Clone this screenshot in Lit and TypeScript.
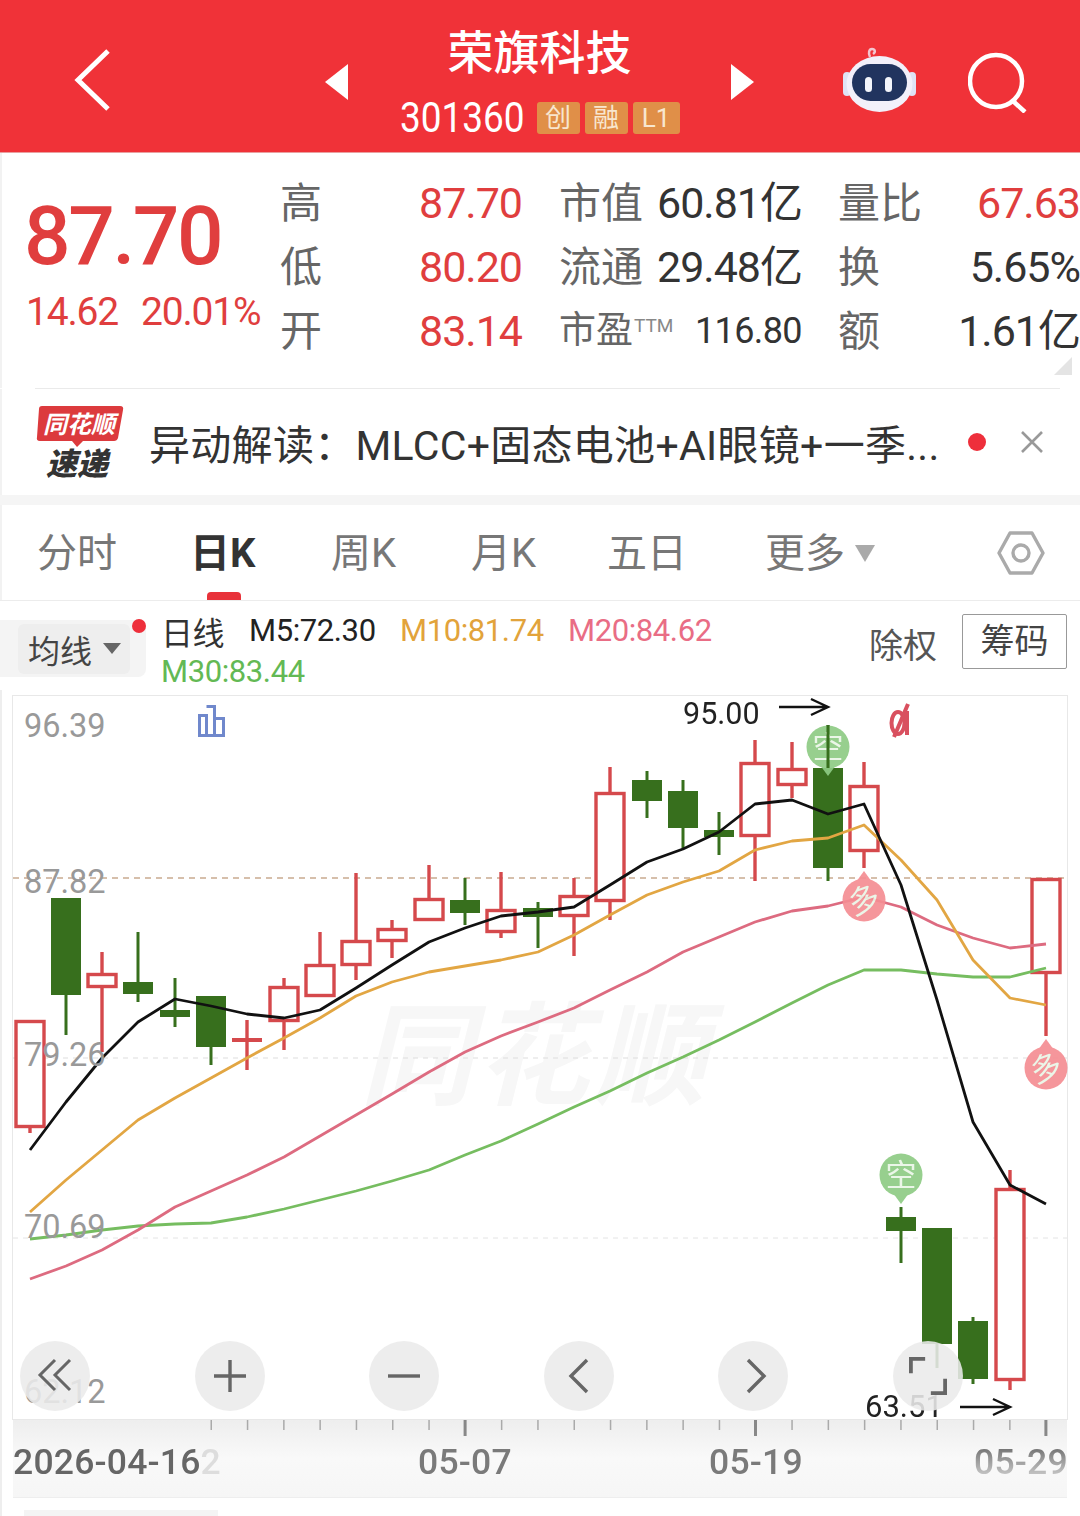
import { LitElement, html, css, svg, unsafeCSS } from 'lit';
import { customElement } from 'lit/decorators.js';

const SANS = unsafeCSS('"Roboto", "Noto Sans CJK SC", sans-serif');

// x, wick top, body top, body bottom, wick bottom
const UP = [
  [30, 1020, 1020, 1128, 1133], [102, 952, 973, 988, 1052], [284, 978, 986, 1022, 1050],
  [320, 932, 964, 997, 997], [356, 873, 940, 966, 980], [392, 920, 928, 942, 958],
  [429, 865, 898, 921, 921], [501, 872, 909, 933, 938], [574, 878, 895, 917, 956],
  [610, 767, 792, 902, 920], [755, 740, 762, 837, 881], [792, 742, 768, 786, 798],
  [864, 762, 785, 852, 868], [1010, 1170, 1188, 1381, 1390], [1046, 878, 878, 974, 1036],
];
const DOWN = [
  [66, 898, 898, 995, 1035], [138, 932, 982, 994, 1002], [175, 978, 1010, 1017, 1027],
  [211, 996, 996, 1047, 1065], [465, 878, 900, 913, 925], [538, 902, 908, 917, 948],
  [647, 771, 780, 801, 818], [683, 780, 791, 828, 848], [719, 812, 830, 837, 855],
  [828, 725, 768, 868, 881], [901, 1207, 1217, 1231, 1263], [937, 1228, 1228, 1344, 1368],
  [973, 1317, 1321, 1379, 1384],
];

const XS = [30, 66, 102, 138, 175, 211, 247, 284, 320, 356, 392, 429, 465, 501, 538, 574, 610, 647, 683, 719, 755, 792, 828, 864, 901, 937, 973, 1010, 1046];
const M5 = [1150, 1102, 1058, 1022, 999, 1006, 1014, 1018, 1010, 988, 965, 942, 928, 916, 912, 907, 885, 862, 849, 832, 804, 800, 814, 804, 885, 1000, 1122, 1185, 1204];
const M10 = [1212, 1180, 1150, 1120, 1098, 1078, 1058, 1038, 1018, 996, 982, 972, 966, 960, 952, 935, 915, 895, 882, 871, 850, 841, 838, 825, 860, 900, 960, 998, 1005];
const M20 = [1279, 1266, 1250, 1230, 1207, 1191, 1175, 1157, 1136, 1115, 1094, 1072, 1052, 1036, 1022, 1008, 990, 972, 952, 937, 922, 911, 906, 897, 907, 925, 938, 948, 944];
const M30 = [1239, 1235, 1230, 1226, 1224, 1223, 1217, 1209, 1200, 1191, 1181, 1170, 1155, 1141, 1124, 1107, 1091, 1073, 1057, 1040, 1022, 1003, 985, 970, 970, 974, 977, 977, 968];

const TICKS = Array.from({ length: 24 }, (_, i) => 211 + i * 36.3);
const points = (ys: number[]) => ys.map((y, i) => `${XS[i]},${y}`).join(' ');

@customElement('app-root')
export class AppRoot extends LitElement {
  static styles = css`
    :host {
      display: block;
      width: 1080px;
      height: 1516px;
      overflow: hidden;
      background: #fff;
      font-family: ${SANS};
      color: #333;
    }
    svg { display: block; }
    .header {
      height: 153px;
      padding-top: 12px;
      background: #f03238;
      border-bottom: 1px solid #e9a0a0;
      box-sizing: border-box;
      display: grid;
      grid-template-columns: 325px 429px 1fr;
      color: #fff;
    }
    .back { margin: 0 0 4px 72px; align-self: center; }
    .center {
      display: flex;
      align-items: center;
      justify-content: space-between;
    }
    .title { text-align: center; align-self: stretch; }
    .name { font-size: 46px; font-weight: 500; line-height: 54px; margin-top: 14px; }
    .code {
      display: flex;
      align-items: center;
      gap: 5px;
      margin-top: 19px;
      font-size: 42px;
      line-height: 38px;
      white-space: nowrap;
    }
    .code b {
      display: inline-block;
      width: 124px;
      margin-right: 8px;
      font-weight: 400;
      text-align: left;
      transform: scaleX(0.88);
      transform-origin: left center;
    }
    .tag {
      width: 43px;
      height: 32px;
      border-radius: 3px;
      background: #e08f48;
      color: #f8e6cf;
      font-size: 26px;
      line-height: 32px;
      text-align: center;
    }
    .tag.wide { width: 47px; }
    .tools { display: flex; align-items: center; margin-left: 89px; gap: 51px; }

    .quote {
      height: 235px;
      box-sizing: border-box;
      padding-top: 18px;
      display: grid;
      grid-template-columns: 280px 242px 280px 278px;
      position: relative;
      box-shadow: inset 2px 0 #f2f2f2;
      white-space: nowrap;
    }
    .price { padding-left: 24px; }
    .big {
      font-size: 82px;
      line-height: 82px;
      margin-top: 24px;
      letter-spacing: -2.4px;
      font-weight: 500;
      color: #e03e3e;
    }
    .chg {
      display: flex;
      gap: 23px;
      margin-top: 13px;
      padding-left: 2px;
      font-size: 39px;
      line-height: 44px;
      letter-spacing: -1.2px;
      color: #e03e3e;
    }
    .col { display: flex; flex-direction: column; }
    .cell {
      height: 64px;
      line-height: 64px;
      display: flex;
      align-items: baseline;
      justify-content: space-between;
      font-size: 42px;
      color: #666;
    }
    .c2 { margin-left: 37px; }
    .c3 { margin-left: 36px; }
    .num { font-size: 43px; letter-spacing: -1px; }
    .red { color: #e03e3e; }
    .dark { color: #333; }
    .small { font-size: 36px; letter-spacing: -0.6px; }
    .ttm { font-size: 37px; color: #666; }
    .ttm sup { font-size: 19px; line-height: 0; vertical-align: 11px; margin-left: 1px; color: #888; }
    .corner {
      position: absolute;
      right: 8px;
      bottom: 13px;
      width: 0;
      height: 0;
      border-left: 18px solid transparent;
      border-bottom: 18px solid #e4e4e4;
    }
    .news-line { height: 1px; margin: 0 20px 0 35px; background: #eaeaea; }
    .news {
      height: 106px;
      display: flex;
      align-items: center;
      padding-left: 36px;
      box-sizing: border-box;
      box-shadow: inset 2px 0 #f2f2f2;
    }
    .logo { align-self: flex-start; margin-top: 16px; }
    .news-text {
      margin-left: 25px;
      width: 800px;
      font-size: 41px;
      letter-spacing: 0.3px;
      color: #333;
      white-space: nowrap;
      overflow: hidden;
    }
    .dot { width: 18px; height: 18px; border-radius: 50%; background: #ee2f3b; margin-left: 19px; }
    .close { margin-left: 34px; }
    .gap { height: 10px; background: #f5f5f5; }

    .tabs {
      height: 96px;
      border-bottom: 1px solid #ececec;
      box-sizing: border-box;
      display: flex;
      align-items: center;
      padding: 0 0 5px 37px;
      position: relative;
      font-size: 40px;
      color: #777;
      box-shadow: inset 2px 0 #f2f2f2;
    }
    .tab { width: 0; white-space: nowrap; }
    .tab.on { color: #333; font-weight: 700; }
    .tab.on::after {
      content: '';
      position: absolute;
      left: 207px;
      bottom: 0;
      width: 34px;
      height: 8px;
      border-radius: 4px 4px 0 0;
      background: #e8323a;
    }
    .caret {
      position: absolute;
      left: 855px;
      top: 40px;
      border-left: 10px solid transparent;
      border-right: 10px solid transparent;
      border-top: 17px solid #aaa;
    }
    .gear { position: absolute; left: 997px; top: 24px; }

    .legend { height: 89px; position: relative; display: flex; }
    .ma {
      width: 146px;
      height: 57px;
      margin-top: 19px;
      background: #f4f4f4;
      border-radius: 0 8px 8px 0;
      display: flex;
      align-items: center;
      box-sizing: border-box;
    }
    .ma-in {
      margin-left: 18px;
      width: 112px;
      height: 50px;
      background: #eee;
      border-radius: 6px;
      display: flex;
      align-items: center;
      padding-left: 10px;
      box-sizing: border-box;
      font-size: 32px;
      color: #444;
      gap: 11px;
    }
    .ma-in i {
      border-left: 9px solid transparent;
      border-right: 9px solid transparent;
      border-top: 11px solid #666;
    }
    .rdot {
      position: absolute;
      left: 132px;
      top: 18px;
      width: 14px;
      height: 14px;
      border-radius: 50%;
      background: #ee2f3b;
    }
    .vals { margin-left: 15px; font-size: 31px; letter-spacing: -0.4px; width: 600px; }
    .vals-row { display: flex; height: 41px; align-items: center; margin-top: 9px; }
    .vals-row + .vals-row { margin-top: 0; }
    .vals-row span { white-space: nowrap; }
    .black { color: #222; width: 151px; }
    .day { color: #333; width: 88px; font-size: 32px; }
    .orange { color: #e2a33b; width: 168px; }
    .pink { color: #e96d85; }
    .green { color: #63b954; }
    .right {
      margin-left: 108px;
      display: flex;
      align-items: flex-start;
      gap: 25px;
      padding-top: 13px;
      font-size: 34px;
      color: #555;
    }
    .right > span { line-height: 64px; }
    .chips {
      width: 105px;
      height: 55px;
      line-height: 53px;
      box-sizing: border-box;
      border: 1px solid #999;
      border-radius: 2px;
      text-align: center;
      color: #444;
    }

    .chart { position: relative; height: 826px; }
    .chart text { font-family: ${SANS}; }
    .ctrls {
      position: absolute;
      left: 20px;
      top: 651px;
      width: 943px;
      display: flex;
      justify-content: space-between;
    }
    .btn {
      width: 70px;
      height: 70px;
      border-radius: 50%;
      background: rgba(234, 234, 234, 0.88);
      display: flex;
      align-items: center;
      justify-content: center;
    }
    .nudge { margin-left: 5px; }
  `;

  private candles() {
    return svg`
      ${UP.map(([x, hi, top, bot, lo]) => svg`
        <line x1=${x} x2=${x} y1=${hi} y2=${top} stroke="#d5494c" stroke-width="3.4"></line>
        <line x1=${x} x2=${x} y1=${bot} y2=${lo} stroke="#d5494c" stroke-width="3.4"></line>
        <rect x=${x - 14} y=${top + 1.5} width="28" height=${bot - top - 3} fill="#fff" stroke="#d5494c" stroke-width="3.4"></rect>
      `)}
      <line x1="247" x2="247" y1="1020" y2="1070" stroke="#d5494c" stroke-width="3.4"></line>
      <rect x="232" y="1038" width="30" height="4" fill="#d5494c"></rect>
      ${DOWN.map(([x, hi, top, bot, lo]) => svg`
        <line x1=${x} x2=${x} y1=${hi} y2=${lo} stroke="#376f1d" stroke-width="3"></line>
        <rect x=${x - 15} y=${top} width="30" height=${bot - top} fill="#376f1d"></rect>
      `)}
    `;
  }

  private marker(x: number, y: number, label: string, color: string, down: boolean, tilt = 0) {
    const tail = down ? `${x - 8},${y + 18} ${x + 8},${y + 18} ${x},${y + 29}` : `${x - 8},${y - 18} ${x + 8},${y - 18} ${x},${y - 29}`;
    return svg`
      <polygon points=${tail} fill=${color}></polygon>
      <circle cx=${x} cy=${y} r="21.5" fill=${color}></circle>
      <text x=${x} y=${y + 11} text-anchor="middle" font-size="31" fill="#eaf6e6" transform="rotate(${tilt} ${x} ${y})">${label}</text>
    `;
  }

  private chart() {
    return html`
      <svg width="1080" height="826" viewBox="0 690 1080 826">
        <defs>
          <linearGradient id="strip" x1="0" y1="0" x2="0" y2="1">
            <stop offset="0" stop-color="#eeeeee"></stop>
            <stop offset="0.5" stop-color="#f9f9f9"></stop>
            <stop offset="1" stop-color="#f6f6f6"></stop>
          </linearGradient>
          <linearGradient id="smear" x1="0" y1="0" x2="0" y2="1">
            <stop offset="0.2" stop-color="#777"></stop>
            <stop offset="1" stop-color="#999" stop-opacity="0.35"></stop>
          </linearGradient>
        </defs>
        <rect x="0" y="690" width="2" height="826" fill="#eee"></rect>
        <rect x="12.5" y="695.5" width="1055" height="724" fill="#fff" stroke="#e8e8e8"></rect>
        <text x="360" y="1096" font-size="112" font-weight="700" font-style="italic" fill="#f7f7f7" letter-spacing="5">同花顺</text>
        <line x1="13" x2="1067" y1="878" y2="878" stroke="#c9ab90" stroke-width="1.5" stroke-dasharray="6 5"></line>
        <line x1="13" x2="1067" y1="1058" y2="1058" stroke="#ddd" stroke-dasharray="5 5"></line>
        <line x1="13" x2="1067" y1="1238" y2="1238" stroke="#e4e4e4" stroke-dasharray="5 5"></line>
        <path d="M199.5 735.5v-20h7v20M206.5 706.5h8v29M214.5 718.5h9v17M198 735.5h27" fill="none" stroke="#7088cc" stroke-width="3"></path>

        ${this.candles()}
        <polyline points=${points(M30)} fill="none" stroke="#76bd60" stroke-width="2.8" stroke-linejoin="round"></polyline>
        <polyline points=${points(M20)} fill="none" stroke="#dd6b80" stroke-width="2.8" stroke-linejoin="round"></polyline>
        <polyline points=${points(M10)} fill="none" stroke="#e2a643" stroke-width="2.8" stroke-linejoin="round"></polyline>
        <polyline points=${points(M5)} fill="none" stroke="#111" stroke-width="2.8" stroke-linejoin="round"></polyline>

        <g font-size="32.5" fill="#999">
          <text x="24" y="737">96.39</text>
          <text x="24" y="893">87.82</text>
          <text x="24" y="1066">79.26</text>
          <text x="24" y="1238">70.69</text>
          <text x="24" y="1403">62.12</text>
        </g>

        <g opacity="0.92">
          ${this.marker(828, 747, '空', '#8ecb84', true)}
          ${this.marker(864, 900, '多', '#f58d92', false, -20)}
          ${this.marker(1046, 1068, '多', '#f58d92', false, -20)}
          ${this.marker(901, 1175, '空', '#8ecb84', true)}
        </g>
        <line x1="828" x2="828" y1="725" y2="768" stroke="#376f1d" stroke-width="3"></line>

        <text x="683" y="724" font-size="30.5" fill="#222">95.00</text>
        <path d="M779 707h49M811 699l17 8-17 8" fill="none" stroke="#111" stroke-width="2.4"></path>
        <g fill="none" stroke="#d9505f" stroke-width="4">
          <ellipse cx="898" cy="723" rx="6.5" ry="11"></ellipse>
          <path d="M907 711v24M894 737l14-33"></path>
        </g>
        <text x="865" y="1417" font-size="31" fill="#222">63.51</text>
        <path d="M960 1407h49M993 1399l17 8-17 8" fill="none" stroke="#111" stroke-width="2.4"></path>

        <rect x="13" y="1420" width="1054" height="77" fill="url(#strip)"></rect>
        <rect x="13" y="1497" width="1054" height="1" fill="#eee"></rect>
        ${TICKS.map((x, i) => svg`
          <rect x=${x - (i % 8 === 7 ? 1.5 : 0.5)} y="1420" width=${i % 8 === 7 ? 3 : 1.5} height=${i % 8 === 7 ? 16 : 10} fill=${i % 8 === 7 ? '#888' : '#aaa'}></rect>
        `)}
        <g font-size="35.5" letter-spacing="0.2" font-weight="500">
          <text x="13" y="1474" fill="#666">2026-04-16<tspan fill="#ddd">2</tspan></text>
          <text x="418" y="1474" fill="#7a7a7a">05-07</text>
          <text x="709" y="1474" fill="#7a7a7a">05-19</text>
          <text x="974" y="1474" fill="url(#smear)">05-29</text>
        </g>
        <rect x="24" y="1510" width="194" height="6" fill="#f4f4f4"></rect>
      </svg>
    `;
  }

  render() {
    return html`
      <div class="header">
        <svg class="back" width="40" height="64" viewBox="0 0 40 64">
          <path d="M36 3 6 32l30 29" fill="none" stroke="#fff" stroke-width="5"></path>
        </svg>
        <div class="center">
          <svg width="24" height="36" viewBox="0 0 24 36"><path d="M23 0v36L0 18z" fill="#fff"></path></svg>
          <div class="title">
            <div class="name">荣旗科技</div>
            <div class="code">
              <b>301360</b>
              <span class="tag">创</span>
              <span class="tag">融</span>
              <span class="tag wide">L1</span>
            </div>
          </div>
          <svg width="24" height="36" viewBox="0 0 24 36"><path d="M1 0v36l23-18z" fill="#fff"></path></svg>
        </div>
        <div class="tools">
          <svg width="74" height="72" viewBox="0 0 74 72">
            <path d="M27 11c-2-4-1-8 2-8s4 3 1 5" fill="none" stroke="#f3c6d0" stroke-width="2.5"></path>
            <rect x="0" y="26" width="8" height="24" rx="4" fill="#dfe3f5"></rect>
            <rect x="65" y="26" width="8" height="24" rx="4" fill="#dfe3f5"></rect>
            <ellipse cx="36.5" cy="38" rx="33" ry="28" fill="#f2f0fa"></ellipse>
            <rect x="9" y="18" width="55" height="37" rx="18.5" fill="#21345f"></rect>
            <rect x="22" y="31" width="7" height="15" rx="3.5" fill="#f3f5fb"></rect>
            <rect x="42" y="31" width="7" height="15" rx="3.5" fill="#f3f5fb"></rect>
          </svg>
          <svg width="60" height="62" viewBox="0 0 60 62">
            <circle cx="28" cy="30" r="26" fill="none" stroke="#fff" stroke-width="4.5"></circle>
            <path d="m45 50 12 11" fill="none" stroke="#fff" stroke-width="4.5"></path>
          </svg>
        </div>
      </div>

      <div class="quote">
        <div class="price">
          <div class="big">87.70</div>
          <div class="chg"><span>14.62</span><span>20.01%</span></div>
        </div>
        <div class="col">
          <div class="cell"><span>高</span><span class="num red">87.70</span></div>
          <div class="cell"><span>低</span><span class="num red">80.20</span></div>
          <div class="cell"><span>开</span><span class="num red">83.14</span></div>
        </div>
        <div class="col c2">
          <div class="cell"><span>市值</span><span class="num dark">60.81亿</span></div>
          <div class="cell"><span>流通</span><span class="num dark">29.48亿</span></div>
          <div class="cell"><span class="ttm">市盈<sup>TTM</sup></span><span class="num dark small">116.80</span></div>
        </div>
        <div class="col c3">
          <div class="cell"><span>量比</span><span class="num red">67.63</span></div>
          <div class="cell"><span>换</span><span class="num dark">5.65%</span></div>
          <div class="cell"><span>额</span><span class="num dark">1.61亿</span></div>
        </div>
        <div class="corner"></div>
      </div>
      <div class="news-line"></div>
      <div class="news">
        <svg class="logo" width="88" height="82" viewBox="0 0 88 82">
          <path d="M6 1h78q4 0 3 4l-5 28q-1 3-4 3H47l-6 6-5-6H4q-4 0-3-4L3 4q0-3 3-3z" fill="#dc3a3d"></path>
          <text x="43" y="28" text-anchor="middle" font-size="24" font-weight="700" font-style="italic" fill="#fff">同花顺</text>
          <text x="41" y="70" text-anchor="middle" font-size="31" font-weight="900" font-style="italic" fill="#333">速递</text>
        </svg>
        <div class="news-text">异动解读：MLCC+固态电池+AI眼镜+一季...</div>
        <div class="dot"></div>
        <svg class="close" width="24" height="24" viewBox="0 0 24 24">
          <path d="m2 2 20 20M22 2 2 22" stroke="#999" stroke-width="2.6" fill="none"></path>
        </svg>
      </div>
      <div class="gap"></div>

      <div class="tabs">
        <span class="tab">分时</span>
        <span class="tab on" style="margin-left:153px">日K</span>
        <span class="tab" style="margin-left:141px">周K</span>
        <span class="tab" style="margin-left:140px">月K</span>
        <span class="tab" style="margin-left:136px">五日</span>
        <span class="tab" style="margin-left:158px">更多</span>
        <i class="caret"></i>
        <svg class="gear" width="48" height="48" viewBox="0 0 48 48">
          <path d="M13 4h22l11 20-11 20H13L2 24z" fill="none" stroke="#aaa" stroke-width="3.4" stroke-linejoin="round"></path>
          <circle cx="24" cy="24" r="8" fill="none" stroke="#aaa" stroke-width="3.4"></circle>
        </svg>
      </div>

      <div class="legend">
        <div class="ma"><div class="ma-in">均线<i></i></div></div>
        <span class="rdot"></span>
        <div class="vals">
          <div class="vals-row">
            <span class="day">日线</span>
            <span class="black">M5:72.30</span>
            <span class="orange">M10:81.74</span>
            <span class="pink">M20:84.62</span>
          </div>
          <div class="vals-row"><span class="green">M30:83.44</span></div>
        </div>
        <div class="right">
          <span>除权</span>
          <div class="chips">筹码</div>
        </div>
      </div>

      <div class="chart">
        ${this.chart()}
        <div class="ctrls">
          <div class="btn">
            <svg width="36" height="36" viewBox="0 0 36 36"><path d="M18 2 3 17l15 15M33 2 18 17l15 15" fill="none" stroke="#666" stroke-width="3"></path></svg>
          </div>
          <div class="btn">
            <svg width="34" height="34" viewBox="0 0 34 34"><path d="M17 1v32M1 17h32" fill="none" stroke="#666" stroke-width="3.4"></path></svg>
          </div>
          <div class="btn">
            <svg width="34" height="34" viewBox="0 0 34 34"><path d="M1 17h32" fill="none" stroke="#666" stroke-width="3.4"></path></svg>
          </div>
          <div class="btn">
            <svg width="24" height="36" viewBox="0 0 24 36"><path d="M20 2 4 18l16 16" fill="none" stroke="#666" stroke-width="3.4"></path></svg>
          </div>
          <div class="btn">
            <svg class="nudge" width="24" height="36" viewBox="0 0 24 36"><path d="m4 2 16 16L4 34" fill="none" stroke="#666" stroke-width="3.4"></path></svg>
          </div>
          <div class="btn">
            <svg width="38" height="38" viewBox="0 0 40 40"><path d="M2 17V2h15M38 23v15H23" fill="none" stroke="#666" stroke-width="4"></path></svg>
          </div>
        </div>
      </div>
    `;
  }
}
